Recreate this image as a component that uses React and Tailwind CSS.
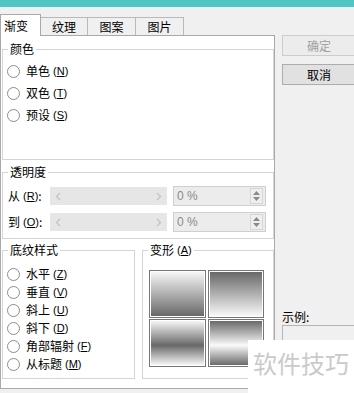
import React from "react";

const Key = ({ k }) => (
  <span className="ml-[3px] font-['Liberation_Sans',sans-serif] text-[11px]">
    (<span className="underline">{k}</span>)
  </span>
);

const Radio = ({ label, k, h = "h-[22px]" }) => (
  <div className={`flex items-center ${h}`}>
    <span className="w-[13px] h-[13px] rounded-full border border-[#8c8c8c] bg-white shrink-0" />
    <span className="ml-[6px] leading-[16px]">{label}</span>
    <Key k={k} />
  </div>
);

const Chevron = ({ dir }) => (
  <svg width="6" height="9" viewBox="0 0 6 9">
    <path
      d={dir === "l" ? "M5 1 L1.5 4.5 L5 8" : "M1 1 L4.5 4.5 L1 8"}
      fill="none"
      stroke="#c4c4c4"
      strokeWidth="1.4"
    />
  </svg>
);

const Slider = () => (
  <div className="w-[117px] h-[18px] bg-[#e6e6e6] flex items-center justify-between px-[5px]">
    <Chevron dir="l" />
    <Chevron dir="r" />
  </div>
);

const Spinner = () => (
  <div className="w-[93px] h-[20px] border border-[#cfcfcf] bg-[#ececec] flex items-center">
    <span className="flex-1 pl-[3px] text-[#8a8a8a] font-['Liberation_Sans',sans-serif] text-[12px]">0 %</span>
    <div className="w-[13px] h-[16px] mr-[2px] border border-[#d6d6d6] bg-[#efefef] flex flex-col items-center justify-center gap-[2px]">
      <svg width="7" height="4" viewBox="0 0 7 4"><path d="M0 4 L3.5 0 L7 4 Z" fill="#8a8a8a" /></svg>
      <svg width="7" height="4" viewBox="0 0 7 4"><path d="M0 0 L3.5 4 L7 0 Z" fill="#8a8a8a" /></svg>
    </div>
  </div>
);

const Swatch = ({ bg, w }) => (
  <div className={`${w} h-[48px] border border-[#767676] bg-white p-[1px]`}>
    <div className="w-full h-full" style={{ background: bg }} />
  </div>
);

export default function App() {
  return (
    <div className="w-[354px] h-[393px] bg-[#f0f0f0] overflow-hidden relative font-['Noto_Sans_CJK_SC','Liberation_Sans',sans-serif] text-[12px] text-black">
      <div className="h-[7px] bg-[#4fc6c2]" />
      <div className="h-px bg-[#e4f2f1]" />
      <div className="flex">
        {/* left column */}
        <div className="w-[283px] flex flex-col">
          <div className="h-[27px] flex items-end">
            <div className="relative z-10 w-[41px] h-[22px] -mb-px bg-white border-l border-t border-r border-[#a9a9a9] pl-[3px] flex items-center leading-[16px]">
              渐变
            </div>
            <div className="w-[47px] h-[18px] border-t border-r border-[#b9b9b9] bg-[#f0f0f0] flex items-center justify-center leading-[16px]">
              纹理
            </div>
            <div className="w-[48px] h-[18px] border-t border-r border-[#b9b9b9] bg-[#f0f0f0] flex items-center justify-center leading-[16px]">
              图案
            </div>
            <div className="w-[48px] h-[18px] border-t border-r border-[#b9b9b9] bg-[#f0f0f0] flex items-center justify-center leading-[16px]">
              图片
            </div>
          </div>
          <div className="h-[354px] border border-[#a9a9a9] bg-white flex flex-col pl-px">
            {/* 颜色 */}
            <fieldset className="mt-[5px] w-[272px] h-[119px] border border-[#d5d5d5]">
              <legend className="ml-[5px] px-[2px] leading-[16px]">颜色</legend>
              <div className="pt-[3px] pl-[4px] flex flex-col">
                <Radio label="单色" k="N" />
                <Radio label="双色" k="T" />
                <Radio label="预设" k="S" />
              </div>
            </fieldset>
            {/* 透明度 */}
            <fieldset className="mt-[4px] w-[272px] h-[75px] border border-[#d5d5d5]">
              <legend className="ml-[5px] px-[2px] leading-[16px]">透明度</legend>
              <div className="pt-[5px] pl-[5px] flex flex-col gap-[4px]">
                <div className="h-[22px] flex items-center">
                  <span className="w-[42px] flex items-center">
                    从<Key k="R" />:
                  </span>
                  <Slider />
                  <span className="ml-[6px]"><Spinner /></span>
                </div>
                <div className="h-[22px] flex items-center">
                  <span className="w-[42px] flex items-center">
                    到<Key k="O" />:
                  </span>
                  <Slider />
                  <span className="ml-[6px]"><Spinner /></span>
                </div>
              </div>
            </fieldset>
            {/* bottom groups */}
            <div className="mt-[3px] flex gap-[7px]">
              <fieldset className="w-[133px] h-[137px] border border-[#d5d5d5]">
                <legend className="ml-[5px] px-[2px] leading-[16px]">底纹样式</legend>
                <div className="pt-[7px] pl-[4px] flex flex-col">
                  <Radio label="水平" k="Z" h="h-[18px]" />
                  <Radio label="垂直" k="V" h="h-[18px]" />
                  <Radio label="斜上" k="U" h="h-[18px]" />
                  <Radio label="斜下" k="D" h="h-[18px]" />
                  <Radio label="角部辐射" k="F" h="h-[18px]" />
                  <Radio label="从标题" k="M" h="h-[18px]" />
                </div>
              </fieldset>
              <fieldset className="w-[132px] h-[137px] border border-[#d5d5d5]">
                <legend className="ml-[5px] px-[2px] leading-[16px] flex items-center">
                  变形<Key k="A" />
                </legend>
                <div className="pt-[12px] pl-[6px] grid grid-cols-[57px_56px] gap-x-[2px] gap-y-[1px]">
                  <Swatch w="w-[57px]" bg="linear-gradient(to bottom, #f6f6f6, #686868)" />
                  <Swatch w="w-[56px]" bg="linear-gradient(to bottom, #686868, #f8f8f8)" />
                  <Swatch w="w-[57px]" bg="linear-gradient(to bottom, #f6f6f6 0%, #686868 55%, #f6f6f6 100%)" />
                  <Swatch w="w-[56px]" bg="linear-gradient(to bottom, #6a6a6a 0%, #fafafa 55%, #6a6a6a 100%)" />
                </div>
              </fieldset>
            </div>
          </div>
        </div>
        {/* right column */}
        <div className="flex-1 pl-[7px] flex flex-col">
          <div className="mt-[27px] w-[74px] h-[21px] shrink-0 border border-[#cccccc] bg-[#ececec] text-[#a0a0a0] flex items-center justify-center leading-[16px]">
            确定
          </div>
          <div className="mt-[8px] w-[74px] h-[21px] shrink-0 border border-[#adadad] bg-[#e1e1e1] flex items-center justify-center leading-[16px]">
            取消
          </div>
          <div className="mt-[224px] leading-[16px]">示例:</div>
          <div className="w-[80px] h-[70px] border border-[#b4b4b4] bg-[#f0f0f0]" />
        </div>
      </div>
      <div className="absolute left-[248px] top-[340px] w-[106px] h-[53px] bg-white pl-[5px] pt-[9px] text-[24px] leading-[28px] text-[#cacaca]">
        软件技巧
      </div>
    </div>
  );
}
